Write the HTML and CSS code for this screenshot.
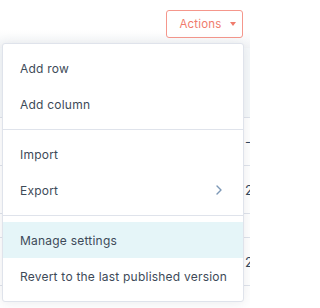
FILE: index.html
```html
<!DOCTYPE html>
<html>
<head>
<meta charset="utf-8">
<link rel="stylesheet" href="styles.css">
</head>
<body>
<div class="page">
  <div class="toolbar">
    <button class="actions-btn">Actions <span class="caret"></span></button>
  </div>
  <div class="table">
    <div class="row head"><span class="cell-spacer"></span><span class="cell"></span></div>
    <div class="row r1"><span class="cell-spacer"></span><span class="cell">-0</span></div>
    <div class="row r2"><span class="cell-spacer"></span><span class="cell">2</span></div>
    <div class="row r3"><span class="cell-spacer"></span><span class="cell"></span></div>
    <div class="row r4"><span class="cell-spacer"></span><span class="cell">2</span></div>
    <div class="row r5"><span class="cell-spacer"></span><span class="cell"></span></div>
  </div>

  <div class="menu">
    <div class="group">
      <div class="item">Add row</div>
      <div class="item">Add column</div>
    </div>
    <div class="sep"></div>
    <div class="group">
      <div class="item">Import</div>
      <div class="item">Export
        <svg class="chev" width="6" height="10" viewBox="0 0 6 10"><path d="M1 1 L5 5 L1 9" fill="none" stroke="#7c98b6" stroke-width="1.4" stroke-linecap="round" stroke-linejoin="round"/></svg>
      </div>
    </div>
    <div class="sep"></div>
    <div class="group">
      <div class="item active">Manage settings</div>
      <div class="item">Revert to the last published version</div>
    </div>
  </div>
</div>
</body>
</html>
```

FILE: styles.css
```css
* { box-sizing: border-box; }
html, body { margin: 0; padding: 0; background: #fff; }
body {
  font-family: Inter, "Noto Sans", "Liberation Sans", sans-serif;
  width: 250px;
  height: 308px;
  overflow: hidden;
}
.page { position: relative; width: 250px; height: 308px; }

.toolbar {
  height: 48px;
  display: flex;
  justify-content: flex-end;
  align-items: flex-start;
  padding: 10px 7px 0 0;
  background: linear-gradient(to bottom, #ffffff 0px, #ffffff 30px, #f3f5f7 48px);
}
.actions-btn {
  width: 77px;
  height: 28px;
  border: 1px solid #f5978c;
  border-radius: 3px;
  background: #fff;
  color: #f07b6c;
  font-family: inherit;
  font-size: 11.5px;
  letter-spacing: 0.2px;
  display: flex;
  align-items: center;
  justify-content: center;
  gap: 8px;
  padding: 0 2px 0 8px;
}
.caret {
  width: 0;
  height: 0;
  border-left: 3.5px solid transparent;
  border-right: 3.5px solid transparent;
  border-top: 4px solid #f07b6c;
}

.table { display: flex; flex-direction: column; }
.row {
  display: flex;
  border-bottom: 1px solid #dfe3eb;
  font-size: 13px;
  color: #33475b;
  align-items: center;
}
.row.head { height: 70px; background: #f5f8fa; }
.row.r1 { height: 48px; }
.row.r2 { height: 48px; }
.row.r3 { height: 24px; }
.row.r4 { height: 48px; }
.row.r5 { height: 30px; }
.cell-spacer { width: 244px; flex: none; }
.cell { padding-left: 1px; }

.menu {
  position: absolute;
  left: 2px;
  top: 43px;
  width: 242px;
  background: #fff;
  border: 1px solid #dfe3eb;
  border-radius: 3px;
  box-shadow: 0 1px 12px rgba(45, 62, 80, 0.10);
  padding: 6px 0 7px;
  display: flex;
  flex-direction: column;
}
.group { display: flex; flex-direction: column; }
.item {
  height: 36px;
  display: flex;
  align-items: center;
  justify-content: space-between;
  padding: 0 21px 0 17px;
  font-size: 12px;
  letter-spacing: 0.22px;
  color: #3d4a58;
  white-space: nowrap;
}
.item.active { background: #e5f5f8; }
.sep {
  height: 1px;
  background: #dfe3eb;
  margin: 7px 0 6px;
}
.chev { display: block; }
```
